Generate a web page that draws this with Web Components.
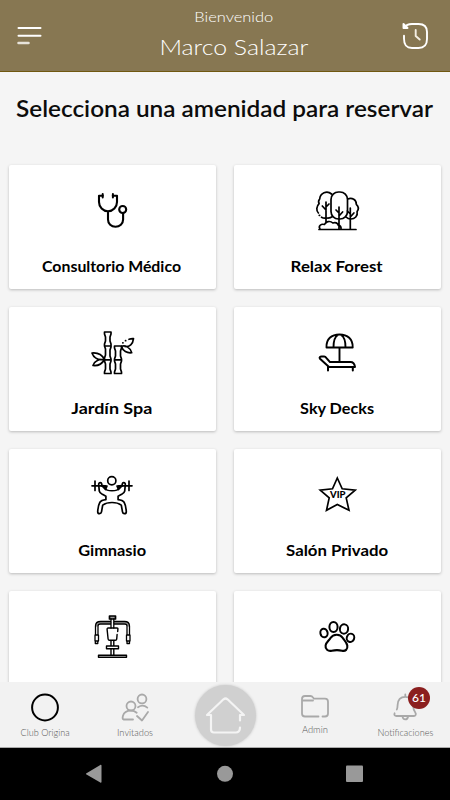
<!DOCTYPE html>
<html lang="es">
<head>
<meta charset="utf-8">
<meta name="viewport" content="width=device-width, initial-scale=1">
<title>Club Origina</title>
<style>
    html, body {
        margin: 0;
        height: 100%;
        overflow: hidden;
    }
    body {
        font-family: Lato, "Open Sans", sans-serif;
        background: #f5f5f5;
    }
</style>
</head>
<body>
<amenity-app></amenity-app>

<script>
// One line of text, stretched to the given width
class FitText extends HTMLElement {
    connectedCallback() {
        this.attachShadow({ mode: 'open' });
        this.shadowRoot.innerHTML = `
            <style>
                :host { display: block; white-space: nowrap; }
                span { display: inline-block; transform-origin: 50% 50%; }
            </style>
            <span><slot></slot></span>
        `;
        const span = this.shadowRoot.querySelector('span');
        const width = Number(this.getAttribute('width'));
        const natural = span.getBoundingClientRect().width;
        if (natural) span.style.transform = `scaleX(${width / natural})`;
    }
}
customElements.define('fit-text', FitText);

const icons = {
    doctor: `
        <path d="M22.700 15.700H19V22c0 5 4 9.300 9 9.300s9-4.300 9-9.300v-6.300h-4.200M28 31.500V39.500c0 4.200 3.300 7.300 7.500 7.300s7.600-3.100 7.600-7.300V33" stroke-width="2.100"/>
        <path d="M22.700 14v3.500M32.900 14v3.500" stroke-width="2"/>
        <circle cx="42.700" cy="29.500" r="3.500" stroke-width="2.100"/>`,
    forest: `
        <rect x="26" y="12" width="16.500" height="27" rx="7.500"/>
        <path d="M26.500 14C22 10 15 13 14.700 19c-1.200 1.300-1.400 3-.6 4.600-2.700 2.600-3.100 7-.7 9.400M16.500 37.200c1.300.8 3 1.100 4.500.9M22 38c2.500.2 4-.2 5.300-1.300M42.700 19c4.400-2 8.800 1 8.600 5.400 2.200 2 2.400 5 .8 7.200 1 4.300-2.300 7.600-6.600 7.400-2 0-3-.6-4.500-2"/>
        <path d="M21 22v21M21 30l-3.700-4M21 27l3-3M34 27v22M34 33l-3-3M34 36l3.600-4M45.300 28v21M45.300 34l-3-3M45.300 37l3.600-4M14 49.500h37M15 49c-2-3 1-5.500 4.500-4.500 1-3.200 5.800-4 8.300-1.500 2.500-1 5 0 5.500 2.200 2.200 0 3 2 2.700 4.200"/>
        <path d="M14.300 35.300h.3" stroke-width="1.800"/>`,
    bamboo: `
        <path d="M24.500 10h6.500v2l-1 3v4l1 3v3l-1 3v6l1 3v2l-1 3v5l1 3v1.500h-6.500V50l1-3v-5l-1-3v-3l1-3v-6l-1-3v-2l1-3v-4l-1-3zM24.500 24H31M24.500 37.800H31"/>
        <path d="M34.500 24h7v2l-1 3v5l1 3v2l-1 3v5l1 3v1.500h-7V50l1-3v-5l-1-3v-2l1-3v-5l-1-3zM34.500 37.800h7"/>
        <path d="M24.500 37.500c-2.500-5-7-7-12.500-6.500 1.500 5 6.500 7.300 12.500 6.500zM24.500 37.500c-5-.5-10 1.500-11.500 6 5 .6 9-1.500 11.500-6zM41.500 24.300c3.500-1.300 8.500.7 10.200 6.400-4.500.6-9-1.500-10.200-6.400zM45 24.500c4.500.5 8-2.500 8.500-7.800-1.500-.2-3 .1-4.500.6"/>
        <path d="M42.800 20.800h.2M45.500 18.700h.2"/>`,
    deck: `
        <path d="M21.500 25.500C21 17 26.500 12.500 34.500 12.500S48 17 47.700 25.500zM28.500 25.500c0-6 1.500-11 4.500-12.500M40.500 25.500c0-6-1.500-11-4.500-12.500M34.500 25.500V39" stroke-width="1.900"/>
        <path d="M23.500 44.500L15 36.800c-1-1.300 0-2.300 1.800-2.200h2.400c1 0 1.600.6 2.300 1.500l3.500 4h20.500c2.400 0 4 1.600 4.500 4.800H24.500c-.6 0-.8-.2-1-.4zM23 44.500v4M47.800 45v3.500" stroke-width="2"/>`,
    gym: `
        <circle cx="31.800" cy="16.700" r="4.100"/>
        <path d="M12 21.800h9.500M42.500 21.800H52M15 17v9.500M49 17v9.500"/>
        <path d="M25 21.800h-3.200c.1-2.300-.4-3.200-1.500-3.200-1.200 0-1.700.8-1.600 2.100l.6 6.500c.2 1.800 1.600 2.400 3.600 3.400l3 1.600v3.500c-2.800.3-5 1-6 2.600-1.800 3-2 6.700-2.200 9.400 0 1.500.8 2 1.900 2s1.700-.7 1.900-1.800l1.200-6.800c2.800-2 5.800-2.600 9.300-2.600s6.500.6 9.300 2.600l1.200 6.800c.2 1.100.8 1.800 1.900 1.800s1.900-.5 1.900-2c-.2-2.700-.4-6.400-2.200-9.400-1-1.600-3.200-2.300-6-2.600v-3.500l3-1.600c2-1 3.400-1.600 3.600-3.400l.6-6.500c.1-1.300-.4-2.100-1.600-2.100-1.100 0-1.600.9-1.500 3.200H39"/>
        <path d="M24 23c2 3.400 4 3.800 8 3.800s6-.4 8-3.800M22 22l4.300 3.700M42 22l-4.300 3.700" stroke-width="1.400"/>
        <path d="M22 21.500l5 .5-1.500 3.500zM42 21.500l-5 .5 1.500 3.500z" fill="currentColor"/>`,
    vip: `
        <path d="M32.300 14L37.200 24.800l13 1.400-9 7.700L44 46.300 32.300 40.500 21.500 46.300 24.200 33.900l-9-7.700 12.300-1.400z" stroke-width="1.700" stroke-linejoin="miter"/>
        <text x="32.800" y="34" text-anchor="middle" font-size="8.800" font-weight="900" font-family="Lato, sans-serif" fill="currentColor" stroke="none" textLength="15.500" lengthAdjust="spacingAndGlyphs">VIP</text>`,
    machine: `
        <path d="M30.500 16.700H20.500c-2.500 0-3.700 1-3.700 3M34 16.700h10.500c2.500 0 3.700 1 3.700 3" stroke="#999" stroke-width="2"/>
        <path d="M29.500 10h6v3h-6z" fill="#999"/>
        <path d="M31 13v9M33.800 13v9M30.500 15.500H20.500c-3 0-5 1.700-5 4.500v9M30.500 18H20.500c-1.700 0-2.500.7-2.500 2v9M34 15.500h10.500c3 0 5 1.700 5 4.500v9M34 18h10.500c1.700 0 2.500.7 2.500 2v9M15 29h3.500v6H15zM46.500 29H50v6h-3.500zM15.300 35.500v2h2.500v-2M47 35.500v2h2.500v-2" stroke-width="1.300"/>
        <path d="M29.500 22h-1.300c-.8 0-1.200.5-1.100 1.300l1 9.700c.1.900.6 1.300 1.400 1.300h5.800c.9 0 1.300-.4 1.400-1.200l.4-4.600M33.500 22H37c.7 0 1 .4.900 1l-.2 2.500M29.500 22h4M31 34.500V40M33.800 34.500V40M26.500 40h12v2.700h-12zM31 43v6M33.800 43v6M18.500 49.300h28v2h-28z" stroke-width="1.400"/>`,
    paw: `
        <path d="M25.500 32c2.700-4.200 9.700-4.500 12.300 0 1.300 2.200 4 4.500 4.500 7.500.6 4-2 6-5.300 5.200-3.200-.8-6.800-.8-10.200 0-3.800.9-6.800-1.500-6.200-5.300.5-3 3.500-5 4.900-7.400z" stroke-width="2.100"/>
        <ellipse cx="19" cy="27" rx="3.600" ry="4.300" transform="rotate(-12 19 27)" stroke-width="2"/>
        <ellipse cx="28.500" cy="21" rx="4.100" ry="5" stroke-width="2"/>
        <ellipse cx="39" cy="23" rx="4.100" ry="4.700" transform="rotate(10 39 23)" stroke-width="2"/>
        <ellipse cx="45.500" cy="31.800" rx="3.700" ry="4.200" transform="rotate(20 45.500 31.800)" stroke-width="2"/>`
};

class AppHeader extends HTMLElement {
    constructor() {
        super();
        this.attachShadow({ mode: 'open' });
    }

    connectedCallback() {
        this.shadowRoot.innerHTML = `
            <style>
                :host {
                    display: flex;
                    justify-content: space-between;
                    height: 72px;
                    box-sizing: border-box;
                    padding: 0 17px;
                    background: #877752;
                    border-bottom: 1px solid #705810;
                    color: #fff;
                }
                svg { fill: none; stroke: #fff; stroke-linecap: round; stroke-linejoin: round; }
                .menu { margin-top: 26px; }
                .history { margin: 22px 4px 0 0; }
                .user { display: flex; flex-direction: column; align-items: center; margin-left: 23px; font-weight: 300; }
                .hello { font-size: 14.500px; line-height: 18px; margin-top: 8px; }
                .name { font-size: 22px; line-height: 26px; margin-top: 8px; }
            </style>
            <svg class="menu" width="26" height="20" viewBox="0 0 26 20" stroke-width="2"><path d="M1.500 2h22M1.500 9.700h22"/><path d="M1.500 16.900h10" stroke="#e7e3da" stroke-width="2.500"/></svg>
            <div class="user">
                <fit-text class="hello" width="79">Bienvenido</fit-text>
                <fit-text class="name" width="149">Marco Salazar</fit-text>
            </div>
            <svg class="history" width="27" height="28" viewBox="0 0 27 28" stroke-width="1.900">
                <path d="M2.800 5.500C4 3 6.500 2 10 2h6.500C22.500 2 25 4.700 25 10v7c0 6-2.500 9-8.500 9H10c-6 0-8-3-8-9.500v-2.800"/>
                <path d="M1.500 2v4h4z" fill="#fff"/><path d="M13.700 8v6l4 3.500" stroke="#f4efe3"/>
            </svg>
        `;
    }
}
customElements.define('app-header', AppHeader);

class AmenityCard extends HTMLElement {
    constructor() {
        super();
        this.attachShadow({ mode: 'open' });
    }

    connectedCallback() {
        const icon = this.getAttribute('icon');
        const width = this.getAttribute('label-width');

        this.shadowRoot.innerHTML = `
            <style>
                :host {
                    display: flex;
                    flex-direction: column;
                    align-items: center;
                    height: 124.500px;
                    box-sizing: border-box;
                    padding-top: 15px;
                    background: #fff;
                    border-radius: 2px;
                    box-shadow: 0 1px 3px rgba(0,0,0,0.24);
                }
                svg {
                    color: #000;
                    fill: none;
                    stroke: currentColor;
                    stroke-width: 1.7;
                    stroke-linecap: round;
                    stroke-linejoin: round;
                    margin-right: 1px;
                }
                fit-text { font-size: 14.500px; line-height: 20px; font-weight: 700; color: #000; margin: 17px 1px 0 0; }
            </style>
            <svg width="64" height="60" viewBox="0 0 64 60">${icons[icon]}</svg>
            <fit-text width="${width}"><slot></slot></fit-text>
        `;
    }
}
customElements.define('amenity-card', AmenityCard);

class NavItem extends HTMLElement {
    constructor() {
        super();
        this.attachShadow({ mode: 'open' });
    }

    connectedCallback() {
        this.shadowRoot.innerHTML = `
            <style>
                :host {
                    display: flex;
                    flex: 1 1 0;
                    min-width: 0;
                    flex-direction: column;
                    align-items: center;
                    padding-top: 8px;
                    position: relative;
                }
                fit-text { font-size: 9.300px; line-height: 12px; font-weight: 300; color: #555; margin-top: 2px; }
                :host([raised]) fit-text { margin-top: -1px; }
            </style>
            <slot name="icon"></slot>
            <fit-text width="${this.getAttribute('label-width')}"><slot></slot></fit-text>
            <slot name="badge"></slot>
        `;
    }
}
customElements.define('nav-item', NavItem);

class BottomNav extends HTMLElement {
    constructor() {
        super();
        this.attachShadow({ mode: 'open' });
    }

    connectedCallback() {
        this.shadowRoot.innerHTML = `
            <style>
                :host {
                    display: flex;
                    height: 66px;
                    box-sizing: border-box;
                    background: #f2f2f2;
                    border-bottom: 1px solid #aaa;
                    position: relative;
                }
                svg { fill: none; stroke: #a9a9a9; stroke-width: 1.8; stroke-linecap: round; stroke-linejoin: round; }
                .home {
                    flex: 1 1 0;
                    display: flex;
                    justify-content: center;
                    padding-top: 3px;
                }
                .disc {
                    width: 61px;
                    height: 61px;
                    border-radius: 50%;
                    background: #d0d0d0;
                    box-shadow: 0 0 3px rgba(0,0,0,0.18);
                }
                .badge {
                    position: absolute;
                    left: 48px;
                    top: 5px;
                    width: 22px;
                    height: 22px;
                    border-radius: 50%;
                    background: #8b1f1f;
                    color: #fff;
                    font: 500 12px/22px Lato, sans-serif;
                    text-align: center;
                }
            </style>
            <nav-item label-width="49">
                <svg slot="icon" width="34" height="35" viewBox="0 0 34 35"><circle cx="17" cy="17.500" r="12.900" stroke="#000" stroke-width="2"/></svg>Club Origina
            </nav-item>
            <nav-item label-width="36">
                <svg slot="icon" width="34" height="35" viewBox="0 0 34 35">
                    <circle cx="24" cy="8.900" r="4.400"/><circle cx="13" cy="16" r="4.500"/>
                    <path d="M15 29.500H5.500c-1-.4-1-2-.6-3.500 1-3.500 4-5.300 8-5.300 2.500 0 4.300.7 5.800 2M20 17.200c3-2 6.500-2 9.300.4M19 26l5 4.500 6-8.500"/>
                </svg>Invitados
            </nav-item>
            <div class="home">
                <div class="disc">
                    <svg width="61" height="61" viewBox="0 0 61 61" style="stroke:#f4f4f4;stroke-width:2.200">
                        <path d="M12 30L28.500 14.300c1.500-1.200 2.500-1.200 4 0L49 30h-4v5.500M12 30h4v14.500c0 2 1 3 3 3h21.500c3 0 4.500-1.800 4.500-5"/>
                    </svg>
                </div>
            </div>
            <nav-item label-width="26" raised>
                <svg slot="icon" width="34" height="35" viewBox="0 0 34 35">
                    <path d="M20.500 26.500H7c-2 0-3-1-3-3V9c0-2 1-3 3-3h5.500c1 0 1.700.3 2.300 1.200l1.200 1.500h11c2 0 3 1 3 3v11.800c0 2-1 3-3 3h-2.500M4.500 10.500h10.500"/>
                </svg>Admin
            </nav-item>
            <nav-item label-width="56">
                <svg slot="icon" width="34" height="35" viewBox="0 0 34 35">
                    <path d="M17.300 4.500v2M8.800 19.500c.7-1 .7-2.300.8-4.500.2-5 3-8.200 7.700-8.200s7.300 3.200 7.700 8.200c.2 3.600.7 5.500 2.400 7.800 1 1.500.2 3.200-1.500 3.200H8.500c-1.800 0-2.600-1-1.900-2.700M14.500 26.500c.5 3.800 5 3.800 5.600 0"/>
                </svg>Notificaciones
                <div slot="badge" class="badge">61</div>
            </nav-item>
        `;
    }
}
customElements.define('bottom-nav', BottomNav);

class SystemBar extends HTMLElement {
    constructor() {
        super();
        this.attachShadow({ mode: 'open' });
    }

    connectedCallback() {
        this.shadowRoot.innerHTML = `
            <style>
                :host { display: flex; justify-content: space-between; align-items: center; height: 52px; padding: 0 84px; background: #000; }
                svg { fill: #999; }
            </style>
            <svg width="20" height="20" viewBox="0 0 20 20"><path d="M17.500 1.500v16.500c0 .7-.6 1-1.200.6L2.500 10.600c-.7-.4-.7-1 0-1.400L16.300.9c.6-.4 1.200-.1 1.200.6z"/></svg>
            <svg width="20" height="20" viewBox="0 0 20 20"><circle cx="10" cy="9.800" r="8"/></svg>
            <svg width="20" height="20" viewBox="0 0 20 20"><rect x="0" y="1.400" width="17" height="16.500" rx="1"/></svg>
        `;
    }
}
customElements.define('system-bar', SystemBar);

const amenities = [
    { name: 'Consultorio Médico', icon: 'doctor', width: 139 },
    { name: 'Relax Forest', icon: 'forest', width: 92 },
    { name: 'Jardín Spa', icon: 'bamboo', width: 81 },
    { name: 'Sky Decks', icon: 'deck', width: 74 },
    { name: 'Gimnasio', icon: 'gym', width: 68 },
    { name: 'Salón Privado', icon: 'vip', width: 102 },
    { name: '', icon: 'machine', width: 0 },
    { name: '', icon: 'paw', width: 0 }
];

class AmenityApp extends HTMLElement {
    constructor() {
        super();
        this.attachShadow({ mode: 'open' });
    }

    connectedCallback() {
        this.shadowRoot.innerHTML = `
            <style>
                :host { display: flex; flex-direction: column; height: 800px; width: 450px; overflow: hidden; }
                main { flex: 1; min-height: 0; overflow: hidden; background: #f5f5f5; }
                h1 { margin: 22px 0 0; font-size: 22px; line-height: 30px; font-weight: 600; text-align: center; color: #0c0c0c; }
                .cards {
                    display: grid;
                    grid-template-columns: 1fr 1fr;
                    gap: 17.500px 18px;
                    padding: 40.500px 9px 0;
                }
            </style>
            <app-header></app-header>
            <main>
                <h1><fit-text width="417">Selecciona una amenidad para reservar</fit-text></h1>
                <div class="cards">
                    ${amenities.map(a => `<amenity-card icon="${a.icon}" label-width="${a.width}">${a.name}</amenity-card>`).join('')}
                </div>
            </main>
            <bottom-nav></bottom-nav>
            <system-bar></system-bar>
        `;
    }
}
customElements.define('amenity-app', AmenityApp);
</script>
</body>
</html>
